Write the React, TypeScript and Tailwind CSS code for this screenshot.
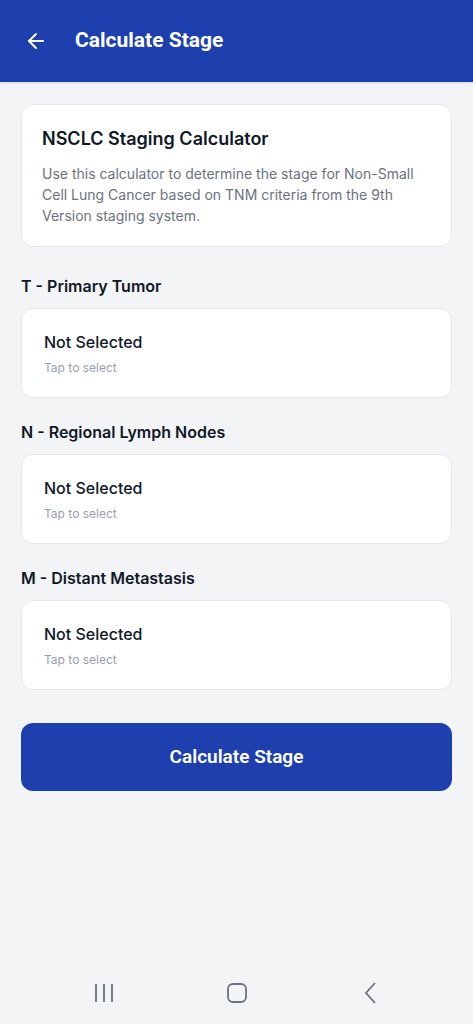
import { ArrowLeft } from 'lucide-react';

const sections = [
  { label: 'T - Primary Tumor' },
  { label: 'N - Regional Lymph Nodes' },
  { label: 'M - Distant Metastasis' },
];

const inter = { fontFamily: 'Inter, "Noto Sans", sans-serif' };

function SelectCard() {
  return (
    <button
      className="w-full rounded-xl border border-gray-200 bg-white py-[21px] pl-[22px] pr-5 text-left"
      style={inter}
    >
      <p className="text-[16px] font-medium leading-6 text-gray-900">Not Selected</p>
      <p className="mt-1.5 text-[12px] leading-4 text-gray-400">Tap to select</p>
    </button>
  );
}

export default function App() {
  return (
    <div
      className="flex min-h-screen flex-col bg-[#f3f4f6]"
      style={{ fontFamily: 'Roboto, "Noto Sans", sans-serif' }}
    >
      {/* header */}
      <header className="flex h-[82px] items-center bg-[#1e40af] px-6 shadow-sm">
        <ArrowLeft className="h-6 w-6 text-white" strokeWidth={2} />
        <h1 className="ml-[27px] text-[21px] font-bold text-white">Calculate Stage</h1>
      </header>

      <main className="flex-1 px-[21px] pt-[22px]">
        <div className="rounded-xl border border-gray-200 bg-white px-5 pb-5 pt-5" style={inter}>
          <h2 className="text-[18px] font-semibold leading-7 text-gray-900">
            NSCLC Staging Calculator
          </h2>
          <p className="mt-2.5 text-[14px] leading-[21px] text-gray-500">
            Use this calculator to determine the stage for Non-Small Cell Lung Cancer based on TNM
            criteria from the 9th Version staging system.
          </p>
        </div>

        {sections.map((s, i) => (
          <section key={s.label} className={i === 0 ? 'mt-[27px]' : 'mt-[22px]'}>
            <h3 className="text-[16px] font-semibold leading-6 text-gray-900" style={inter}>
              {s.label}
            </h3>
            <div className="mt-2.5">
              <SelectCard />
            </div>
          </section>
        ))}

        <button className="mt-[33px] h-[68px] w-full rounded-xl bg-[#1e40af] text-[19px] font-semibold text-white">
          Calculate Stage
        </button>
      </main>

      {/* system nav */}
      <nav className="flex h-[62px] items-center justify-center">
        <div className="flex w-[133px] justify-center">
          <svg width="22" height="20" viewBox="0 0 22 20" className="text-gray-500">
            <path d="M3 1v18M11 1v18M19 1v18" stroke="currentColor" strokeWidth="1.8" />
          </svg>
        </div>
        <div className="flex w-[133px] justify-center">
          <svg width="22" height="22" viewBox="0 0 22 22" className="text-gray-500">
            <rect x="2" y="2" width="18" height="18" rx="5" fill="none" stroke="currentColor" strokeWidth="1.8" />
          </svg>
        </div>
        <div className="flex w-[133px] justify-center">
          <svg width="14" height="22" viewBox="0 0 14 22" className="text-gray-500">
            <path d="M12 1 3 11l9 10" fill="none" stroke="currentColor" strokeWidth="1.8" />
          </svg>
        </div>
      </nav>
    </div>
  );
}
